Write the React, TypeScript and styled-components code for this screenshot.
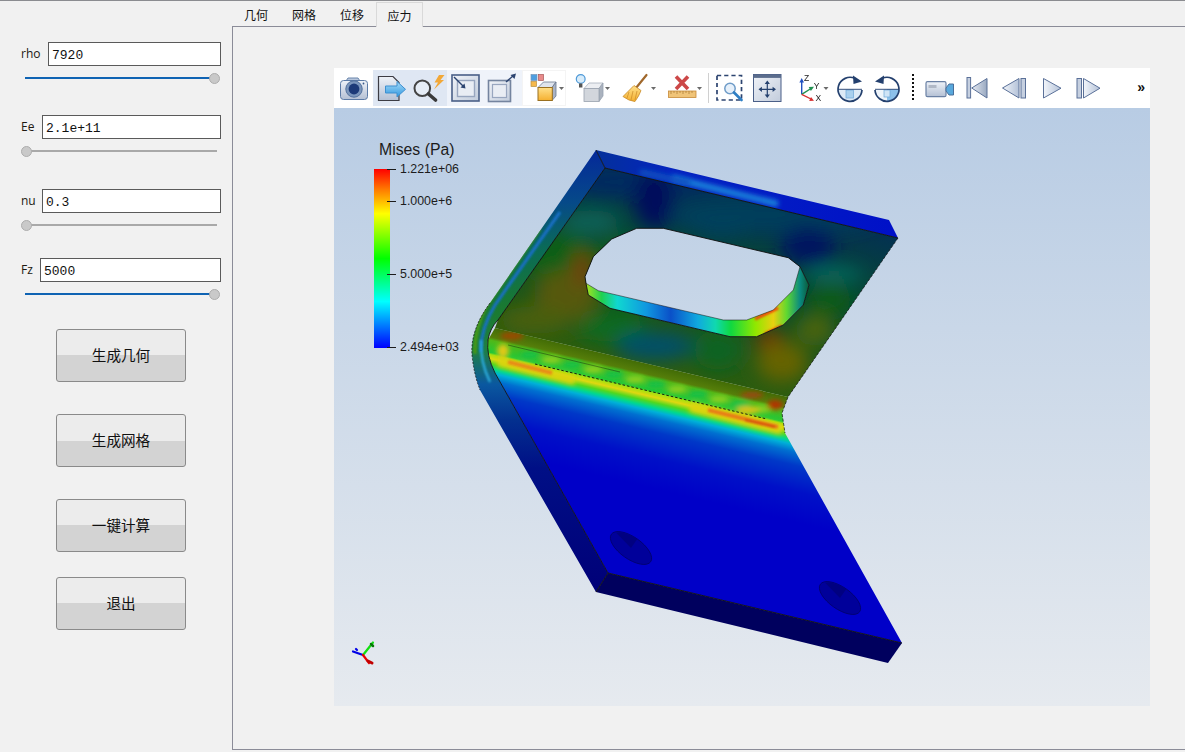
import React from "react"
import styled, { createGlobalStyle } from "styled-components"

const GlobalStyle = createGlobalStyle`
  html, body {
    margin: 0;
    padding: 0;
    background: #f1f1f1;
    overflow: hidden;
  }
  * { box-sizing: border-box; }
`

const CJK = `"Noto Sans CJK SC", "Liberation Sans", sans-serif`

const Page = styled.div`
  width: 1185px;
  height: 752px;
  display: flex;
  background: #f1f1f1;
  border-top: 1px solid #8b8c90;
`

/* left column */
const Sidebar = styled.aside`
  width: 232px;
  flex: none;
  display: flex;
  flex-direction: column;
  padding-top: 41px;
`

const Param = styled.div<{ $top: number }>`
  margin-top: ${(p) => p.$top}px;
`

const FieldRow = styled.div`
  display: flex;
  align-items: center;
  gap: 7px;
  padding: 0 11px 0 21px;
`

const FieldLabel = styled.label<{ $w: number }>`
  width: ${(p) => p.$w}px;
  flex: none;
  font: 12px "Open Sans", "Liberation Sans", sans-serif;
  color: #201810;
  position: relative;
  top: -1px;
`

const FieldInput = styled.input`
  flex: 1;
  min-width: 0;
  height: 24px;
  border: 1px solid #5a5a5a;
  background: #fff;
  padding: 3px 3px 0;
  font: 13px "Liberation Mono", monospace;
  color: #111;
  outline: none;
`

const SliderWrap = styled.div`
  position: relative;
  width: 200px;
  height: 12px;
  margin: 6px 0 0 21px;
`

const SliderTrack = styled.div<{ $full: boolean }>`
  position: absolute;
  top: 5px;
  left: 4px;
  right: 4px;
  height: 2px;
  background: ${(p) => (p.$full ? "#0f63b3" : "#a9a9a9")};
`

const SliderHandle = styled.div<{ $full: boolean }>`
  position: absolute;
  top: 1px;
  ${(p) => (p.$full ? "right: 1px;" : "left: 0;")}
  width: 11px;
  height: 11px;
  border-radius: 50%;
  background: #c9c9c9;
  border: 1px solid #adadad;
`

const ActionButton = styled.button<{ $top: number }>`
  display: block;
  width: 130px;
  height: 53px;
  margin: ${(p) => p.$top}px 0 0 56px;
  padding: 0 0 3px;
  border: 1px solid #8a8a8a;
  border-radius: 3px;
  background: linear-gradient(#ececec 0 50%, #d3d3d3 50% 100%);
  font: 14.6px ${CJK};
  color: #111;
`

/* tabs */
const Main = styled.main`
  flex: 1;
  min-width: 0;
  display: flex;
  flex-direction: column;
`

const TabBar = styled.nav`
  display: flex;
  height: 25px;
  padding-top: 1px;
`

const Tab = styled.div<{ $active?: boolean }>`
  width: ${(p) => (p.$active ? 47 : 48)}px;
  height: ${(p) => (p.$active ? 25 : 24)}px;
  display: flex;
  align-items: center;
  justify-content: center;
  font: 12px ${CJK};
  color: #111;
  position: relative;
  z-index: 1;
  background: #f1f1f1;
  ${(p) => p.$active && "border: 1px solid #d9d9d9; border-bottom: 0;"}
`

const Pane = styled.section`
  height: 724px;
  border: 1px solid #8b8c98;
  border-right: 0;
  padding: 41px 0 0 101px;
`

const Viewer = styled.div`
  width: 816px;
  height: 638px;
  display: flex;
  flex-direction: column;
`

/* toolbar */
const Toolbar = styled.div`
  height: 40px;
  flex: none;
  display: flex;
  background: #fff;
`

const toneCss: Record<string, string> = {
  hot: "background: #dfe7f3; box-shadow: inset 0 2px #fff, inset 0 -2px #fff;",
  soft: "background: #eff3fa; box-shadow: inset 0 2px #fff, inset 0 -2px #fff;",
  edge: "box-shadow: inset 0 2px #fff, inset 0 3px #f4f4f4, inset 0 -2px #fff, inset 0 -3px #f4f4f4, inset 1px 0 #f4f4f4, inset -1px 0 #f4f4f4;",
}

const ToolSlot = styled.div<{ $w: number; $tone?: string }>`
  width: ${(p) => p.$w}px;
  height: 40px;
  flex: none;
  ${(p) => (p.$tone ? toneCss[p.$tone] : "")}
`

const ToolSvg = styled.svg`
  display: block;
  filter: blur(0.3px);
`

const Overflow = styled.div`
  margin-left: auto;
  padding: 0 5px 0 0;
  font: bold 14px/39px "Liberation Sans", sans-serif;
  color: #111;
`

const HiddenDefs = styled.svg`
  position: absolute;
  width: 0;
  height: 0;
`

const Tool = ({ w, tone, children }: { w: number; tone?: string; children: React.ReactNode }) => (
  <ToolSlot $w={w} $tone={tone}>
    <ToolSvg width={w} height={40} viewBox={`0 0 ${w} 40`}>
      {children}
    </ToolSvg>
  </ToolSlot>
)

const Caret = ({ x }: { x: number }) => (
  <polygon points={`${x - 2.5},19 ${x + 2.5},19 ${x},22`} fill="#6a6a6a" />
)

/* 3d view */
const Canvas = styled.div`
  position: relative;
  flex: 1;
  background: linear-gradient(#b8cce4, #e6eaef);
`

const ModelSvg = styled.svg`
  display: block;
  position: absolute;
  inset: 0;
`

const Legend = styled.div`
  position: absolute;
  left: 45px;
  top: 32px;
  color: #1c1c1c;
  font-family: "Liberation Sans", sans-serif;
`

const LegendTitle = styled.div`
  font-size: 15.8px;
  line-height: 20px;
`

const Scale = styled.div`
  position: relative;
  width: 16px;
  height: 179px;
  margin: 9px 0 0 -5px;
  background: linear-gradient(#ff0000 0%, #ff8000 12%, #ffff00 25%, #00ff00 50%, #00ffff 74%, #0000ff 100%);
`

const Tick = styled.div<{ $y: number }>`
  position: absolute;
  left: 13px;
  top: ${(p) => p.$y - 7}px;
  height: 14px;
  display: flex;
  align-items: center;
  white-space: nowrap;
  font-size: 12.4px;
  &::before {
    content: "";
    width: 9px;
    height: 1px;
    margin-right: 4px;
    background: #1c1c1c;
  }
`

const params = [
  { name: "rho", labelW: 20, value: "7920", full: true, top: 0 },
  { name: "Ee", labelW: 14, value: "2.1e+11", full: false, top: 31 },
  { name: "nu", labelW: 14, value: "0.3", full: false, top: 32 },
  { name: "Fz", labelW: 12, value: "5000", full: true, top: 27 },
]

const actions = [
  { text: "生成几何", top: 29 },
  { text: "生成网格", top: 32 },
  { text: "一键计算", top: 32 },
  { text: "退出", top: 25 },
]

// soft colour patches on the upper flange (page coordinates)
const flangeBlobs = [
  [640, 182, 90, 16, "#032a60"],
  [770, 215, 110, 18, "#063c5c"],
  [590, 222, 30, 12, "#0a6258"],
  [654, 200, 20, 30, "#020f5c"],
  [722, 222, 34, 16, "#06405c"],
  [808, 246, 28, 20, "#01125e"],
  [560, 258, 38, 24, "#0a5e14"],
  [620, 276, 30, 40, "#0a5a18"],
  [566, 296, 32, 26, "#56580a"],
  [582, 268, 8, 18, "#7c3806"],
  [535, 320, 36, 14, "#4a5e08"],
  [612, 328, 34, 14, "#0a6a22"],
  [655, 346, 40, 14, "#04506a"],
  [718, 350, 24, 20, "#0a6420"],
  [770, 340, 15, 10, "#7a3006"],
  [782, 362, 26, 20, "#666404"],
  [834, 274, 30, 6, "#0a7468"],
  [830, 300, 22, 14, "#0a5c14"],
  [815, 330, 20, 16, "#4a6408"],
] as const

const bandBlobs = [
  [512, 336, 12, 4, "#9a4a06"],
  [752, 395, 12, 3, "#a0440a"],
  [775, 405, 8, 5, "#b03404"],
  [503, 351, 6, 7, "#e0c818"],
  [748, 410, 12, 4, "#dcc414"],
] as const

// mottled yellow and green along the bright strip of the bend
const mottle = Array.from({ length: 12 }, (_, i) => {
  const x = 530 + i * 21
  return { x, y: 383 + (x - 650) * 0.2355, fill: i % 2 ? "#90d020" : "#14c048" }
})

const holeRim = "M636.7,228.3 L663.3,228.3 L788.3,257.7 L800,266.7 L809,285 L803.3,305 L783.3,325 L756.7,336.7 L730,336.7 L610,308.3 L588.3,295 L586,283.3 L585,276.7 L593.3,256.7 L611.7,239 Z"
const flangePath = `M605,168 L898,238 L788,397 L495,328 L498,320 Z ${holeRim}`
const wallPath = "M586,283.3 L598.3,290.7 L723.3,320 L746.7,320 L773.3,310 L793.3,290 L800,266.7 L809,285 L803.3,305 L783.3,325 L756.7,336.7 L730,336.7 L610,308.3 L588.3,295 Z"
const platePath = "M495,328 L788,397 L782,413 L785,433 L902,643 L608,573 L495,373 Q486,355 488,340 Z"
const sidePath = "M596,150 L490,303 Q470,330 472,355 Q474,375 480,390 L596,592 L608,573 L495,373 Q486,355 488,340 Q490,328 498,320 L605,168 Z"

const Model = () => (
  <ModelSvg width={816} height={598} viewBox="334 108 816 598">
    <defs>
      <filter id="b9" x="-60%" y="-60%" width="220%" height="220%"><feGaussianBlur stdDeviation="9" /></filter>
      <filter id="b3" x="-50%" y="-50%" width="200%" height="200%"><feGaussianBlur stdDeviation="2.8" /></filter>
      <filter id="b1" x="-30%" y="-30%" width="160%" height="160%"><feGaussianBlur stdDeviation="1.2" /></filter>
      <clipPath id="clipFlange"><path d={flangePath} clipRule="evenodd" /></clipPath>
      <clipPath id="clipPlate"><path d={platePath} /></clipPath>
      <clipPath id="clipSide"><path d={sidePath} /></clipPath>
      <clipPath id="clipTop"><path d="M596,150 L889,220 L898,238 L605,168 Z" /></clipPath>
      <clipPath id="clipWall"><path d={wallPath} /></clipPath>
      <linearGradient id="flangeBase" gradientUnits="userSpaceOnUse" x1="720" y1="170" x2="670" y2="370">
        <stop offset="0" stopColor="#032a5c" />
        <stop offset="0.5" stopColor="#064c2c" />
        <stop offset="1" stopColor="#2c5c0e" />
      </linearGradient>
      <linearGradient id="plateBase" gradientUnits="userSpaceOnUse" x1="650" y1="364.5" x2="622.4" y2="481.3">
        <stop offset="0" stopColor="#426c06" />
        <stop offset="0.083" stopColor="#567e0a" />
        <stop offset="0.108" stopColor="#50b818" />
        <stop offset="0.208" stopColor="#22c838" />
        <stop offset="0.225" stopColor="#a8e010" />
        <stop offset="0.258" stopColor="#e0d810" />
        <stop offset="0.3" stopColor="#50d820" />
        <stop offset="0.342" stopColor="#00d890" />
        <stop offset="0.375" stopColor="#00b0d8" />
        <stop offset="0.433" stopColor="#0070d0" />
        <stop offset="0.54" stopColor="#0038c8" />
        <stop offset="0.75" stopColor="#0010c8" />
        <stop offset="1" stopColor="#0000c8" />
      </linearGradient>
      <linearGradient id="wallBase" gradientUnits="userSpaceOnUse" x1="586" y1="0" x2="809" y2="0">
        <stop offset="0" stopColor="#a8e420" />
        <stop offset="0.07" stopColor="#20d050" />
        <stop offset="0.14" stopColor="#10d8d0" />
        <stop offset="0.27" stopColor="#1098e0" />
        <stop offset="0.38" stopColor="#0a50c8" />
        <stop offset="0.5" stopColor="#10a8e0" />
        <stop offset="0.58" stopColor="#10d8b0" />
        <stop offset="0.65" stopColor="#10d840" />
        <stop offset="0.76" stopColor="#90e800" />
        <stop offset="0.84" stopColor="#e8d010" />
        <stop offset="0.9" stopColor="#60d830" />
        <stop offset="0.96" stopColor="#0a8a80" />
        <stop offset="1" stopColor="#0a5a38" />
      </linearGradient>
      <linearGradient id="sideBase" gradientUnits="userSpaceOnUse" x1="0" y1="150" x2="0" y2="592">
        <stop offset="0" stopColor="#04289a" />
        <stop offset="0.12" stopColor="#064a88" />
        <stop offset="0.22" stopColor="#0a6a58" />
        <stop offset="0.36" stopColor="#1a7a30" />
        <stop offset="0.45" stopColor="#208040" />
        <stop offset="0.53" stopColor="#0a58a0" />
        <stop offset="0.61" stopColor="#03308f" />
        <stop offset="0.72" stopColor="#000f86" />
        <stop offset="1" stopColor="#000078" />
      </linearGradient>
      <linearGradient id="topBase" gradientUnits="userSpaceOnUse" x1="596" y1="0" x2="898" y2="0">
        <stop offset="0" stopColor="#04309a" />
        <stop offset="0.25" stopColor="#0424c0" />
        <stop offset="1" stopColor="#0010c8" />
      </linearGradient>
    </defs>

    {/* thin left side and top side */}
    <path d={sidePath} fill="url(#sideBase)" />
    <g clipPath="url(#clipSide)">
      <path d="M560,212 L495,305 Q480,330 481,352" fill="none" stroke="#1670c4" strokeWidth="3.2" filter="url(#b1)" />
      <path d="M540,229 L486,306 Q474,330 475,354" fill="none" stroke="#4a9a18" strokeWidth="3" filter="url(#b1)" />
      <path d="M481,340 Q480,362 490,382" fill="none" stroke="#2aa8d8" strokeWidth="2.5" filter="url(#b1)" />
    </g>
    <path d="M596,150 L889,220 L898,238 L605,168 Z" fill="url(#topBase)" />
    <g clipPath="url(#clipTop)">
      <path d="M672,178 L778,204" stroke="#1c88dc" strokeWidth="6" fill="none" filter="url(#b3)" />
      <path d="M640,172 L690,183" stroke="#0c50c0" strokeWidth="6" fill="none" filter="url(#b3)" />
    </g>

    {/* upper flange with the slot cut out */}
    <path d={flangePath} fillRule="evenodd" fill="url(#flangeBase)" />
    <g clipPath="url(#clipFlange)">
      <g filter="url(#b9)">
        {flangeBlobs.map(([cx, cy, rx, ry, fill], i) => (
          <ellipse key={i} cx={cx} cy={cy} rx={rx} ry={ry} fill={fill} />
        ))}
      </g>
    </g>

    {/* slot wall */}
    <path d={wallPath} fill="url(#wallBase)" />
    <g clipPath="url(#clipWall)">
      <g filter="url(#b1)">
        <path d="M755,319 L778,308" stroke="#f03c08" strokeWidth="3" fill="none" />
        <path d="M765,334 L782,326" stroke="#f03c08" strokeWidth="3" fill="none" />
      </g>
    </g>

    {/* bend and lower plate */}
    <path d={platePath} fill="url(#plateBase)" />
    <g clipPath="url(#clipPlate)">
      <g filter="url(#b3)">
        {mottle.map((m) => (
          <ellipse key={m.x} cx={m.x} cy={m.y} rx={10} ry={3.5} fill={m.fill} />
        ))}
        {bandBlobs.map(([cx, cy, rx, ry, fill], i) => (
          <ellipse key={i} cx={cx} cy={cy} rx={rx} ry={ry} fill={fill} />
        ))}
        <path d="M498,362 L575,381" stroke="#dcd410" strokeWidth="9" fill="none" />
        <path d="M690,407 L782,430" stroke="#dcd410" strokeWidth="10" fill="none" />
      </g>
      <g filter="url(#b1)">
        <path d="M508,362 L552,373" stroke="#e88a18" strokeWidth="4" fill="none" />
        <path d="M708,410 L778,427" stroke="#e87c18" strokeWidth="4" fill="none" />
        <path d="M745,420 L775,427" stroke="#d85010" strokeWidth="2.5" fill="none" />
      </g>
    </g>

    {/* lower plate thickness */}
    <path d="M608,573 L902,643 L888,663 L596,592 Z" fill="#00005e" />

    {/* bolt holes */}
    <g transform="rotate(35 631 548)">
      <ellipse cx="631" cy="548" rx="24" ry="11" fill="#00009a" stroke="#00006a" strokeWidth="0.8" />
      <path d="M610,544 A24,11 0 0 1 631,537 L631,548 Z" fill="#000080" />
    </g>
    <g transform="rotate(35 840 598)">
      <ellipse cx="840" cy="598" rx="24" ry="11" fill="#00009a" stroke="#00006a" strokeWidth="0.8" />
      <path d="M819,594 A24,11 0 0 1 840,587 L840,598 Z" fill="#000080" />
    </g>

    {/* feature edges */}
    <g fill="none" stroke="#101010" strokeWidth="0.9">
      <path d="M605,168 L898,238" />
      <path d="M596,150 L605,168" />
      <path d="M605,168 L498,320 Q490,328 488,340 Q486,355 495,373 L608,573 L902,643" />
      <path d="M608,573 L596,592" />
      <path d={holeRim} />
      <path d="M586,283.3 L598.3,290.7 L723.3,320 L746.7,320 L773.3,310 L793.3,290 L800,266.7" strokeWidth="0.5" />
      <path d="M508,345 L620,372" strokeWidth="0.4" />
      <path d="M535,364 L767,419" strokeDasharray="2.5 2" />
      <path d="M898,238 L788,397 L782,413 L785,433" strokeWidth="0.7" strokeDasharray="3 1.5" />
      <path d="M490,303 Q470,330 472,355 Q474,375 480,390" strokeWidth="0.7" strokeDasharray="2 1.5" />
    </g>

    {/* orientation axes */}
    <g fill="none" strokeWidth="2.2" strokeLinecap="round">
      <path d="M363,655 L353,651.5" stroke="#0000e6" />
      <path d="M363,655 L373,642.5" stroke="#10e010" />
      <path d="M363,655 L369,663" stroke="#e60000" />
      <path d="M356,649 L357,650" stroke="#0000e6" />
      <path d="M368,661 L372,663" stroke="#c00000" strokeWidth="3" />
      <path d="M371,644 L373,646" stroke="#087808" strokeWidth="2.5" />
    </g>
  </ModelSvg>
)

const App = () => (
  <Page>
    <GlobalStyle />
    <HiddenDefs>
      <defs>
        <linearGradient id="gMetal" x1="0" y1="0" x2="0" y2="1">
          <stop offset="0" stopColor="#eef2f8" />
          <stop offset="1" stopColor="#b4c0d4" />
        </linearGradient>
        <linearGradient id="gBlue" x1="0" y1="0" x2="0" y2="1">
          <stop offset="0" stopColor="#a9dcf8" />
          <stop offset="1" stopColor="#2f97e0" />
        </linearGradient>
        <linearGradient id="gPanel" x1="0" y1="0" x2="1" y2="1">
          <stop offset="0" stopColor="#f0f3f8" />
          <stop offset="1" stopColor="#c2ccdc" />
        </linearGradient>
        <linearGradient id="gOrange" x1="0" y1="0" x2="0" y2="1">
          <stop offset="0" stopColor="#ffe08a" />
          <stop offset="1" stopColor="#f5b030" />
        </linearGradient>
        <linearGradient id="gPlay" x1="0" y1="0" x2="1" y2="0">
          <stop offset="0" stopColor="#f2f5fa" />
          <stop offset="1" stopColor="#b4c2d8" />
        </linearGradient>
        <linearGradient id="gPlayBack" x1="0" y1="0" x2="1" y2="0">
          <stop offset="0" stopColor="#e8ecf4" />
          <stop offset="1" stopColor="#98a8c0" />
        </linearGradient>
      </defs>
    </HiddenDefs>

    <Sidebar>
      {params.map((p) => (
        <Param key={p.name} $top={p.top}>
          <FieldRow>
            <FieldLabel $w={p.labelW}>{p.name}</FieldLabel>
            <FieldInput defaultValue={p.value} />
          </FieldRow>
          <SliderWrap>
            <SliderTrack $full={p.full} />
            <SliderHandle $full={p.full} />
          </SliderWrap>
        </Param>
      ))}
      {actions.map((a) => (
        <ActionButton key={a.text} $top={a.top}>{a.text}</ActionButton>
      ))}
    </Sidebar>

    <Main>
      <TabBar>
        <Tab>几何</Tab>
        <Tab>网格</Tab>
        <Tab>位移</Tab>
        <Tab $active>应力</Tab>
      </TabBar>
      <Pane>
        <Viewer>
          <Toolbar>
            {/* camera */}
            <Tool w={39}>
              <path d="M12,13 L14,10 H24 L26,13" fill="#b8c6dc" stroke="#6a86ac" />
              <rect x="6.5" y="12.5" width="27" height="19" rx="3" fill="url(#gMetal)" stroke="#5c7ba6" />
              <circle cx="20" cy="21" r="8.2" fill="#7b96bc" stroke="#52709c" />
              <circle cx="20" cy="21" r="5.4" fill="#1c3a78" />
              <circle cx="29.5" cy="15.5" r="0.9" fill="#3a5a8a" />
            </Tool>
            {/* export */}
            <Tool w={37} tone="hot">
              <path d="M5.5,8.5 H20 L26,14.5 V32.5 H5.5 Z" fill="url(#gMetal)" stroke="#3c3c44" strokeWidth="1.2" />
              <path d="M12.5,18 H24 V13.5 L32.5,21.3 L24,29 V25 H12.5 Z" fill="url(#gBlue)" stroke="#3d8fd0" />
            </Tool>
            {/* zoom to data */}
            <Tool w={37} tone="hot">
              <path d="M29,7 L24.5,14.5 H28 L24,21.5 L34,12 H30.5 L34.5,7 Z" fill="#f2a838" />
              <circle cx="12.3" cy="20.3" r="7.8" fill="#e6edf6" stroke="#444" strokeWidth="2" />
              <path d="M18.5,26 L25.5,32" stroke="#3a3a3a" strokeWidth="3.6" strokeLinecap="round" />
            </Tool>
            {/* box in */}
            <Tool w={37} tone="soft">
              <rect x="5" y="7" width="27" height="26" fill="url(#gPanel)" stroke="#4a5f88" strokeWidth="1.6" />
              <rect x="10.5" y="12.5" width="17" height="16" fill="#e9edf4" stroke="#98a6bf" strokeWidth="1.4" />
              <path d="M7,9 L17,19" stroke="#2c4470" strokeWidth="1.4" />
              <polygon points="18.5,20.5 13.5,19.5 17.5,15.5" fill="#2c4470" />
            </Tool>
            {/* box out */}
            <Tool w={38} tone="soft">
              <rect x="4.5" y="12.5" width="22" height="21" fill="url(#gPanel)" stroke="#74849f" strokeWidth="1.6" />
              <rect x="8.5" y="16.5" width="14" height="13" fill="#e9edf4" stroke="#98a6bf" strokeWidth="1.2" />
              <path d="M22,14 L29,8" stroke="#2c4470" strokeWidth="1.4" />
              <polygon points="32,5.5 30.5,11 26.5,7" fill="#2c4470" />
            </Tool>
            {/* representation cube */}
            <Tool w={44} tone="edge">
              <rect x="9" y="6.5" width="6" height="6" fill="#4f9fe0" stroke="#7a98b8" strokeWidth="0.7" />
              <rect x="16.5" y="6.5" width="5" height="6" fill="#e88a8a" stroke="#a85858" strokeWidth="0.7" />
              <rect x="9" y="13.5" width="5.5" height="5" fill="#f5b84a" stroke="#b89040" strokeWidth="0.7" />
              <polygon points="16,19.5 21.5,14 34,14 30,19.5" fill="#dfe4ec" stroke="#6a7890" strokeWidth="0.8" />
              <polygon points="30,19.5 34,14 34,28 30,32.5" fill="#a8b2c4" stroke="#6a7890" strokeWidth="0.8" />
              <rect x="16" y="19.5" width="14.3" height="13" fill="url(#gOrange)" stroke="#9a7020" />
              <Caret x={39.5} />
            </Tool>
            {/* light */}
            <Tool w={49}>
              <circle cx="14.7" cy="11" r="4.4" fill="#d8ecfa" stroke="#4f9ad8" strokeWidth="1.2" />
              <rect x="13" y="15.5" width="3.4" height="4" fill="#555" />
              <polygon points="18,20.5 23,15 37,15 33,20.5" fill="#eceef2" stroke="#a8b0bc" strokeWidth="0.8" />
              <polygon points="33,20.5 37,15 37,28 33,33.5" fill="#aab2be" stroke="#98a2b0" strokeWidth="0.8" />
              <rect x="18" y="20.5" width="15" height="13" fill="#d2d6dc" stroke="#9aa2ae" strokeWidth="0.8" />
              <Caret x={41.5} />
            </Tool>
            {/* broom */}
            <Tool w={45}>
              <path d="M31.5,7 L21,20" stroke="#a0682c" strokeWidth="2.2" strokeLinecap="round" />
              <path d="M19,17.5 L8,28.5 Q14,33 20,33.5 Q24,28 26,22.5 Z" fill="url(#gOrange)" stroke="#c88a28" strokeWidth="0.8" />
              <path d="M14,24 L12,30 M18,23 L16,32 M22,23 L20,32" stroke="#c88a28" strokeWidth="0.7" />
              <Caret x={38.5} />
            </Tool>
            {/* clear ruler */}
            <Tool w={44}>
              <path d="M16,8.5 L28,21 M28,8.5 L16,21" stroke="#cc4848" strokeWidth="3.6" />
              <rect x="8.5" y="23" width="27.5" height="6.5" fill="#f0c478" stroke="#c88a38" strokeWidth="0.8" />
              <path d="M11,23 v3 M14,23 v2 M17,23 v3 M20,23 v2 M23,23 v3 M26,23 v2 M29,23 v3 M32,23 v2" stroke="#a87830" strokeWidth="0.7" />
              <Caret x={39.5} />
            </Tool>
            <Tool w={8}>
              <path d="M4.5,5 V35" stroke="#d0d0d0" />
            </Tool>
            {/* zoom to box */}
            <Tool w={36}>
              <rect x="5" y="7.5" width="24.5" height="24.5" fill="none" stroke="#2c4470" strokeWidth="1.7" strokeDasharray="4.2 3" />
              <circle cx="18" cy="20.5" r="5.2" fill="#e6f0fa" stroke="#6f9cc8" strokeWidth="1.5" />
              <path d="M22,24.5 L29.5,32" stroke="#2f7fc4" strokeWidth="2.6" strokeLinecap="round" />
            </Tool>
            {/* pan */}
            <Tool w={42}>
              <rect x="5.5" y="6.5" width="27.5" height="27" fill="url(#gPanel)" stroke="#4a5f88" />
              <rect x="5.5" y="6.5" width="27.5" height="3.4" fill="#5a6c8c" />
              <path d="M19.3,14.5 V28 M12.5,21.3 H26" stroke="#24406e" strokeWidth="1.2" />
              <path d="M19.3,12.5 l-2.6,3.4 h5.2 Z M19.3,30 l-2.6,-3.4 h5.2 Z M10.5,21.3 l3.4,-2.6 v5.2 Z M28,21.3 l-3.4,-2.6 v5.2 Z" fill="#24406e" />
            </Tool>
            {/* axes */}
            <Tool w={42}>
              <path d="M11.7,26.3 V13" stroke="#2050c0" strokeWidth="1.4" />
              <polygon points="11.7,10 9.4,14.5 14,14.5" fill="#2050c0" />
              <path d="M11.7,26.3 L21,20.5" stroke="#209050" strokeWidth="1.4" />
              <polygon points="24,18.7 18.7,19 20.9,22.9" fill="#209050" />
              <path d="M11.7,26.3 L21,31" stroke="#d83030" strokeWidth="1.4" />
              <polygon points="24,32.8 19.2,32.9 21,28.9" fill="#d83030" />
              <text x="14" y="12.5" fontFamily="Liberation Sans" fontSize="8.5" fill="#222">Z</text>
              <text x="23.8" y="20.5" fontFamily="Liberation Sans" fontSize="8.5" fill="#222">Y</text>
              <text x="25.5" y="33" fontFamily="Liberation Sans" fontSize="8.5" fill="#222">X</text>
              <Caret x={36} />
            </Tool>
            {/* rotate cw */}
            <Tool w={37}>
              <path d="M6,21.3 H30 A12,12 0 0 1 6,21.3 Z" fill="#dceaf6" />
              <rect x="14" y="22" width="7.5" height="8" fill="#a8d0ee" stroke="#6aa6d8" strokeWidth="0.7" />
              <path d="M6,21.3 H30" stroke="#24406e" strokeWidth="0.9" />
              <path d="M30,22 A12,12 0 1 1 23,10.4" fill="none" stroke="#24406e" strokeWidth="1.7" />
              <polygon points="21,7.5 30,13.5 21.5,16" fill="#24406e" />
            </Tool>
            {/* rotate ccw */}
            <Tool w={36}>
              <path d="M6,21.3 H30 A12,12 0 0 1 6,21.3 Z" fill="#eef4fa" />
              <path d="M18,21.3 H30 A12,12 0 0 1 18,33.3 Z" fill="#8cc0ea" />
              <rect x="15" y="22" width="6" height="7" fill="#cfe4f6" stroke="#6aa6d8" strokeWidth="0.7" />
              <path d="M6,21.3 H30" stroke="#24406e" strokeWidth="0.9" />
              <path d="M6,22 A12,12 0 1 0 13,10.4" fill="none" stroke="#24406e" strokeWidth="1.7" />
              <polygon points="15,7.5 6,13.5 14.5,16" fill="#24406e" />
            </Tool>
            <Tool w={15}>
              <path d="M8,6 V32" stroke="#111" strokeWidth="2" strokeDasharray="2 2" />
            </Tool>
            {/* camera path */}
            <Tool w={40}>
              <rect x="6" y="13.7" width="20" height="15" rx="1.5" fill="url(#gMetal)" stroke="#6a80a4" strokeWidth="1.2" />
              <rect x="8.5" y="17" width="8" height="3" fill="#b0b8c6" />
              <path d="M26,20 L29,16 H33.5 V27 H29 L26,23 Z" fill="#58a8dc" stroke="#4a6f9a" />
            </Tool>
            {/* first frame */}
            <Tool w={35}>
              <rect x="7" y="9.5" width="3.6" height="20.5" fill="#c6d0e0" stroke="#5a7098" />
              <polygon points="11.7,20 27,10.5 27,30" fill="url(#gPlayBack)" stroke="#5a7098" />
            </Tool>
            {/* previous frame */}
            <Tool w={39}>
              <polygon points="7.5,20 24,10.5 24,30" fill="url(#gPlay)" stroke="#5a7098" />
              <rect x="26" y="10.5" width="4.5" height="19.5" fill="#c6d0e0" stroke="#5a7098" />
            </Tool>
            {/* play */}
            <Tool w={36}>
              <polygon points="9.5,10.5 27,20.2 9.5,30" fill="url(#gPlay)" stroke="#5a7098" />
            </Tool>
            {/* next frame */}
            <Tool w={40}>
              <rect x="7" y="10.5" width="4.5" height="19.5" fill="#c6d0e0" stroke="#5a7098" />
              <polygon points="13.5,10.5 30,20.2 13.5,30" fill="url(#gPlay)" stroke="#5a7098" />
            </Tool>
            <Overflow>»</Overflow>
          </Toolbar>
          <Canvas>
            <Model />
            <Legend>
              <LegendTitle>Mises (Pa)</LegendTitle>
              <Scale>
                <Tick $y={0}>1.221e+06</Tick>
                <Tick $y={32}>1.000e+6</Tick>
                <Tick $y={105}>5.000e+5</Tick>
                <Tick $y={178}>2.494e+03</Tick>
              </Scale>
            </Legend>
          </Canvas>
        </Viewer>
      </Pane>
    </Main>
  </Page>
)

export default App
